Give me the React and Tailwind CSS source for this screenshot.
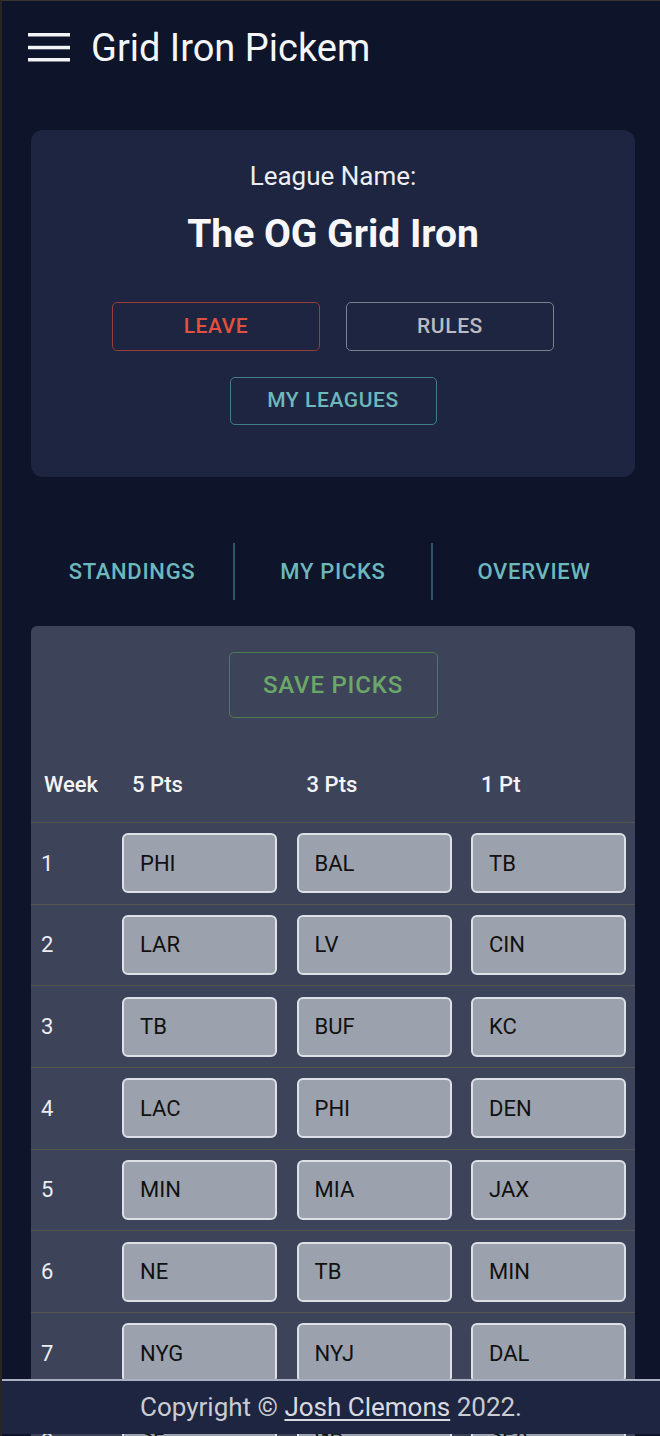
import React from "react";

const rows = [
  ["PHI", "BAL", "TB"],
  ["LAR", "LV", "CIN"],
  ["TB", "BUF", "KC"],
  ["LAC", "PHI", "DEN"],
  ["MIN", "MIA", "JAX"],
  ["NE", "TB", "MIN"],
  ["NYG", "NYJ", "DAL"],
  ["SF", "GB", "SEA"],
  ["CLE", "PIT", "IND"],
];

const font = { fontFamily: "Roboto, 'Noto Sans', sans-serif" };

export default function App() {
  return (
    <div
      className="min-h-screen bg-[#0e142a] border-l-2 border-t border-l-[#262626] border-t-[#3a342e] text-white pb-[80px]"
      style={font}
    >
      {/* Header */}
      <header className="h-[93px] flex items-center pl-[26px]">
        <svg width="42" height="29" viewBox="0 0 42 29" className="shrink-0">
          <rect x="0" y="0" width="42" height="3.5" fill="#f3f4f6" />
          <rect x="0" y="12.8" width="42" height="3.5" fill="#f3f4f6" />
          <rect x="0" y="25" width="42" height="3.5" fill="#f3f4f6" />
        </svg>
        <h1 className="ml-[21px] text-[38px] leading-none font-normal text-[#f5f6f8]">
          Grid Iron Pickem
        </h1>
      </header>

      <div className="pl-[29px] pr-[25px]">
        {/* League card */}
        <section className="mt-[36px] bg-[#1e2540] rounded-[12px] pt-[30px] pb-[52px] flex flex-col items-center">
          <div className="text-[26px] leading-[32px] text-[#eceef3]">League Name:</div>
          <div className="mt-[18px] text-[39px] leading-[48px] font-bold text-[#f7f7f9]">
            The OG Grid Iron
          </div>
          <div className="mt-[44px] flex gap-[26px]">
            <button className="w-[208px] h-[49px] rounded-[5px] border border-[#9a3d38] text-[#e3503f] text-[21px] font-medium uppercase tracking-[0.6px]">
              Leave
            </button>
            <button className="w-[208px] h-[49px] rounded-[5px] border border-[#7b808d] text-[#b9bcc3] text-[21px] font-medium uppercase tracking-[0.6px]">
              Rules
            </button>
          </div>
          <button className="mt-[26px] w-[207px] h-[48px] rounded-[5px] border border-[#437d8a] text-[#6cb8bc] text-[21px] font-medium uppercase tracking-[0.6px]">
            My Leagues
          </button>
        </section>

        {/* Tabs */}
        <nav className="mt-[66px] grid grid-cols-[202px_198px_204px] h-[57px]">
          <div className="flex items-center justify-center text-[22px] font-medium uppercase tracking-[0.7px] text-[#6cb8bc]">
            Standings
          </div>
          <div className="flex items-center justify-center border-l-2 border-[#2e5566] text-[22px] font-medium uppercase tracking-[0.7px] text-[#6cb8bc]">
            My Picks
          </div>
          <div className="flex items-center justify-center border-l-2 border-[#2e5566] text-[22px] font-medium uppercase tracking-[0.7px] text-[#6cb8bc]">
            Overview
          </div>
        </nav>

        {/* Picks card */}
        <section className="mt-[26px] bg-[#3d4358] rounded-t-[6px] pt-[26px]">
          <div className="flex justify-center">
            <button className="w-[209px] h-[66px] rounded-[5px] border border-[#4f7a52] text-[#6ba868] text-[24px] font-medium uppercase tracking-[0.8px]">
              Save Picks
            </button>
          </div>

          <div className="mt-[26px] h-[78px] pt-[2px] flex items-center text-[22px] font-medium text-[#f3f4f6]">
            <div className="w-[91px] pl-[13px]">Week</div>
            <div className="flex gap-[19.5px]">
              <div className="w-[155px] pl-[10px]">5 Pts</div>
              <div className="w-[155px] pl-[10px]">3 Pts</div>
              <div className="w-[155px] pl-[10px]">1 Pt</div>
            </div>
          </div>

          {rows.map((r, i) => (
            <div
              key={i}
              className="h-[81.67px] border-t border-[#56554d] flex items-center"
            >
              <div className="w-[91px] pl-[10px] text-[22px] text-[#eceef2]">{i + 1}</div>
              <div className="flex gap-[19.5px]">
                {r.map((t, j) => (
                  <div
                    key={j}
                    className="w-[155px] h-[60px] rounded-[6px] border-2 border-[#dde1e7] bg-[#9ba2ad] flex items-center pl-[16px] text-[22px] text-[#111111]"
                  >
                    {t}
                  </div>
                ))}
              </div>
            </div>
          ))}
        </section>
      </div>

      {/* Footer */}
      <footer className="fixed bottom-[2px] left-[2px] right-0 h-[55px] bg-[#1e2540] border-t-2 border-[#a9b1c2] flex items-center justify-center text-[26px] text-[#c9ccd3]">
        <span>
          Copyright © <span className="underline underline-offset-[3px] text-[#d9dbe0]">Josh Clemons</span> 2022.
        </span>
      </footer>
    </div>
  );
}
